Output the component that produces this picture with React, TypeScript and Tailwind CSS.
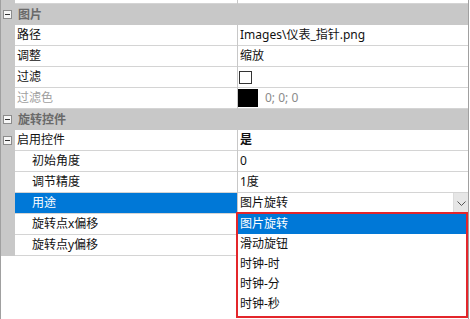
import React from "react";

const FONT = { fontFamily: '"Noto Sans", "Noto Sans CJK SC", "Microsoft YaHei", sans-serif' };

function Minus() {
  return (
    <div className="ml-[2px] flex h-[9px] w-[9px] items-center justify-center border border-[#8c8c8c] bg-[#f7f7f7]">
      <div className="h-[1px] w-[5px] bg-[#333]" />
    </div>
  );
}

function Category({ label }: { label: string }) {
  return (
    <div className="flex h-[21px] bg-[#c8c8c8]">
      <div className="flex w-[14px] shrink-0 items-center">
        <Minus />
      </div>
      <div className="flex items-center pl-[3px] font-bold text-[#6a6a6a]">{label}</div>
    </div>
  );
}

function Row({
  name,
  value,
  indent = false,
  expand = false,
  selected = false,
  disabled = false,
}: {
  name: string;
  value?: React.ReactNode;
  indent?: boolean;
  expand?: boolean;
  selected?: boolean;
  disabled?: boolean;
}) {
  return (
    <div className="flex h-[21px]">
      <div className="flex w-[14px] shrink-0 items-center bg-[#c8c8c8]">{expand ? <Minus /> : null}</div>
      <div
        className={
          "flex w-[222px] shrink-0 items-center border-b border-[#d4d4d4] " +
          (indent ? "pl-[17px] " : "pl-[2px] ") +
          (selected ? "bg-[#0078d7] text-white" : disabled ? "text-[#a0a0a0]" : "text-[#111]")
        }
      >
        {name}
      </div>
      <div className="w-[1px] shrink-0 bg-[#c8c8c8]" />
      <div className="flex w-[230px] shrink-0 items-center border-b border-[#d4d4d4] text-[#111]">{value}</div>
    </div>
  );
}

export default function App() {
  const items = ["图片旋转", "滑动旋钮", "时钟-时", "时钟-分", "时钟-秒"];
  return (
    <div className="relative h-[319px] w-[470px] overflow-hidden bg-white text-[12px] leading-[20px]" style={FONT}>
      <div className="flex h-full w-[469px] flex-col border-l border-r border-[#a0a0a0]">
        {/* partial top row */}
        <div className="flex h-[4px]">
          <div className="w-[14px] shrink-0 bg-[#c8c8c8]" />
          <div className="w-[222px] shrink-0 border-b border-[#d4d4d4]" />
          <div className="w-[1px] shrink-0 bg-[#c8c8c8]" />
          <div className="w-[230px] shrink-0 border-b border-[#d4d4d4]" />
        </div>
        <Category label="图片" />
        <Row name="路径" value={<span className="pl-[2px]">Images\仪表_指针.png</span>} />
        <Row name="调整" value={<span className="pl-[2px]">缩放</span>} />
        <Row
          name="过滤"
          value={<div className="ml-[1px] h-[13px] w-[13px] border border-[#333] bg-white" />}
        />
        <Row
          name="过滤色"
          disabled
          value={
            <div className="flex items-center">
              <div className="h-[18px] w-[20px] bg-black" />
              <span className="pl-[7px] text-[#8a8a8a]">0; 0; 0</span>
            </div>
          }
        />
        <Category label="旋转控件" />
        <Row name="启用控件" expand value={<span className="pl-[2px] font-bold">是</span>} />
        <Row name="初始角度" indent value={<span className="pl-[2px]">0</span>} />
        <Row name="调节精度" indent value={<span className="pl-[2px]">1度</span>} />
        <Row
          name="用途"
          indent
          selected
          value={
            <div className="flex h-full w-full items-center justify-between">
              <span className="pl-[2px]">图片旋转</span>
              <div className="flex h-full w-[15px] items-center justify-center border-l border-[#dcdcdc] bg-[#e6e6e6]">
                <svg width="9" height="5" viewBox="0 0 9 5">
                  <path d="M0.5 0.5 L4.5 4.5 L8.5 0.5" fill="none" stroke="#555" strokeWidth="1" />
                </svg>
              </div>
            </div>
          }
        />
        <Row name="旋转点x偏移" indent />
        <Row name="旋转点y偏移" indent />
        <div className="flex-1" />
      </div>

      {/* dropdown list */}
      <div className="absolute left-[236px] top-[212px] h-[106px] w-[232px] border-2 border-[#e3262b] bg-white">
        {items.map((it, i) => (
          <div
            key={it}
            className={
              "flex h-[20px] items-center pl-[2px] " + (i === 0 ? "bg-[#0078d7] text-white" : "text-[#111]")
            }
          >
            {it}
          </div>
        ))}
      </div>
    </div>
  );
}
